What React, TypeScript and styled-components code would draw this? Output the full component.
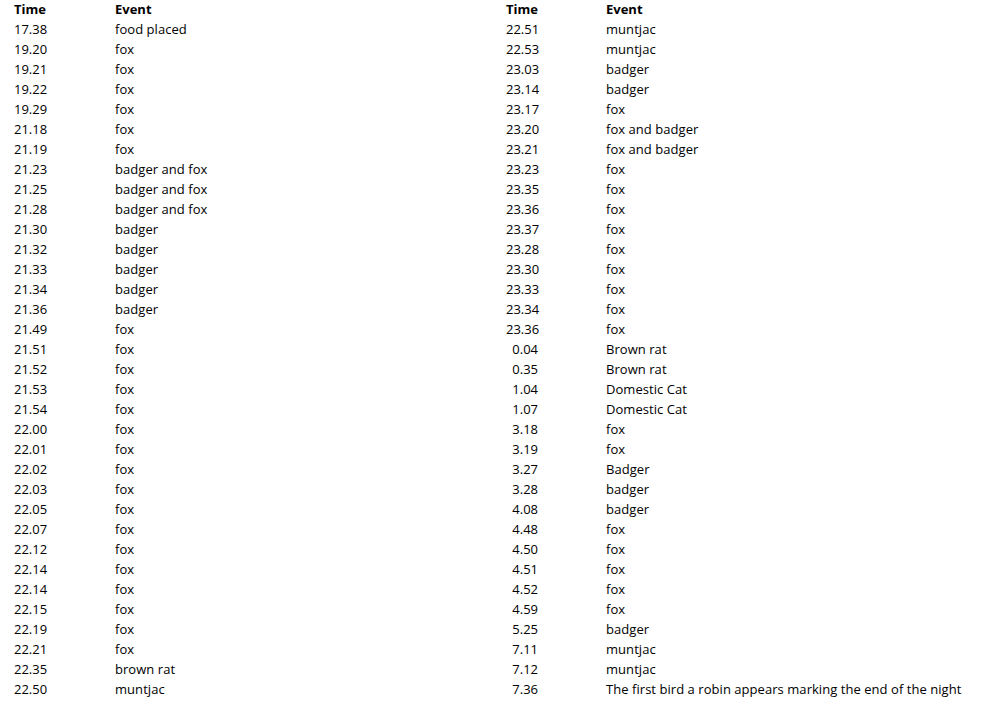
import React from "react";
import styled, { createGlobalStyle } from "styled-components";

const Global = createGlobalStyle`
  html, body { margin: 0; padding: 0; background: #ffffff; }
  body { font-family: "Open Sans", "Liberation Sans", Arial, sans-serif; color: #000; }
`;

const Page = styled.div`
  display: grid;
  grid-template-columns: 492px 1fr;
  padding: 0 0 0 14px;
  margin-top: -1px;
  width: 1000px;
  height: 716px;
  box-sizing: border-box;
  overflow: hidden;
`;

const Table = styled.div<{ $timeCol: number }>`
  display: grid;
  grid-template-columns: ${(p) => p.$timeCol}px 1fr;
  grid-auto-rows: 20px;
  align-items: center;
  font-size: 13px;
  line-height: 20px;
`;

const Head = styled.div`
  font-weight: bold;
  white-space: nowrap;
`;

const TimeCell = styled.div`
  width: 32px;
  text-align: right;
  white-space: nowrap;
`;

const EventCell = styled.div`
  white-space: nowrap;
  letter-spacing: 0.05px;
`;

const left: [string, string][] = [
  ["17.38", "food placed"],
  ["19.20", "fox"],
  ["19.21", "fox"],
  ["19.22", "fox"],
  ["19.29", "fox"],
  ["21.18", "fox"],
  ["21.19", "fox"],
  ["21.23", "badger and fox"],
  ["21.25", "badger and fox"],
  ["21.28", "badger and fox"],
  ["21.30", "badger"],
  ["21.32", "badger"],
  ["21.33", "badger"],
  ["21.34", "badger"],
  ["21.36", "badger"],
  ["21.49", "fox"],
  ["21.51", "fox"],
  ["21.52", "fox"],
  ["21.53", "fox"],
  ["21.54", "fox"],
  ["22.00", "fox"],
  ["22.01", "fox"],
  ["22.02", "fox"],
  ["22.03", "fox"],
  ["22.05", "fox"],
  ["22.07", "fox"],
  ["22.12", "fox"],
  ["22.14", "fox"],
  ["22.14", "fox"],
  ["22.15", "fox"],
  ["22.19", "fox"],
  ["22.21", "fox"],
  ["22.35", "brown rat"],
  ["22.50", "muntjac"],
];

const right: [string, string][] = [
  ["22.51", "muntjac"],
  ["22.53", "muntjac"],
  ["23.03", "badger"],
  ["23.14", "badger"],
  ["23.17", "fox"],
  ["23.20", "fox and badger"],
  ["23.21", "fox and badger"],
  ["23.23", "fox"],
  ["23.35", "fox"],
  ["23.36", "fox"],
  ["23.37", "fox"],
  ["23.28", "fox"],
  ["23.30", "fox"],
  ["23.33", "fox"],
  ["23.34", "fox"],
  ["23.36", "fox"],
  ["0.04", "Brown rat"],
  ["0.35", "Brown rat"],
  ["1.04", "Domestic Cat"],
  ["1.07", "Domestic Cat"],
  ["3.18", "fox"],
  ["3.19", "fox"],
  ["3.27", "Badger"],
  ["3.28", "badger"],
  ["4.08", "badger"],
  ["4.48", "fox"],
  ["4.50", "fox"],
  ["4.51", "fox"],
  ["4.52", "fox"],
  ["4.59", "fox"],
  ["5.25", "badger"],
  ["7.11", "muntjac"],
  ["7.12", "muntjac"],
  ["7.36", "The first bird a robin appears marking the end of the night"],
];

function Log({ rows, timeCol }: { rows: [string, string][]; timeCol: number }) {
  return (
    <Table $timeCol={timeCol}>
      <Head>Time</Head>
      <Head>Event</Head>
      {rows.map(([t, e], i) => (
        <React.Fragment key={i}>
          <TimeCell>{t}</TimeCell>
          <EventCell>{e}</EventCell>
        </React.Fragment>
      ))}
    </Table>
  );
}

export default function App() {
  return (
    <>
      <Global />
      <Page>
        <Log rows={left} timeCol={101} />
        <Log rows={right} timeCol={100} />
      </Page>
    </>
  );
}
